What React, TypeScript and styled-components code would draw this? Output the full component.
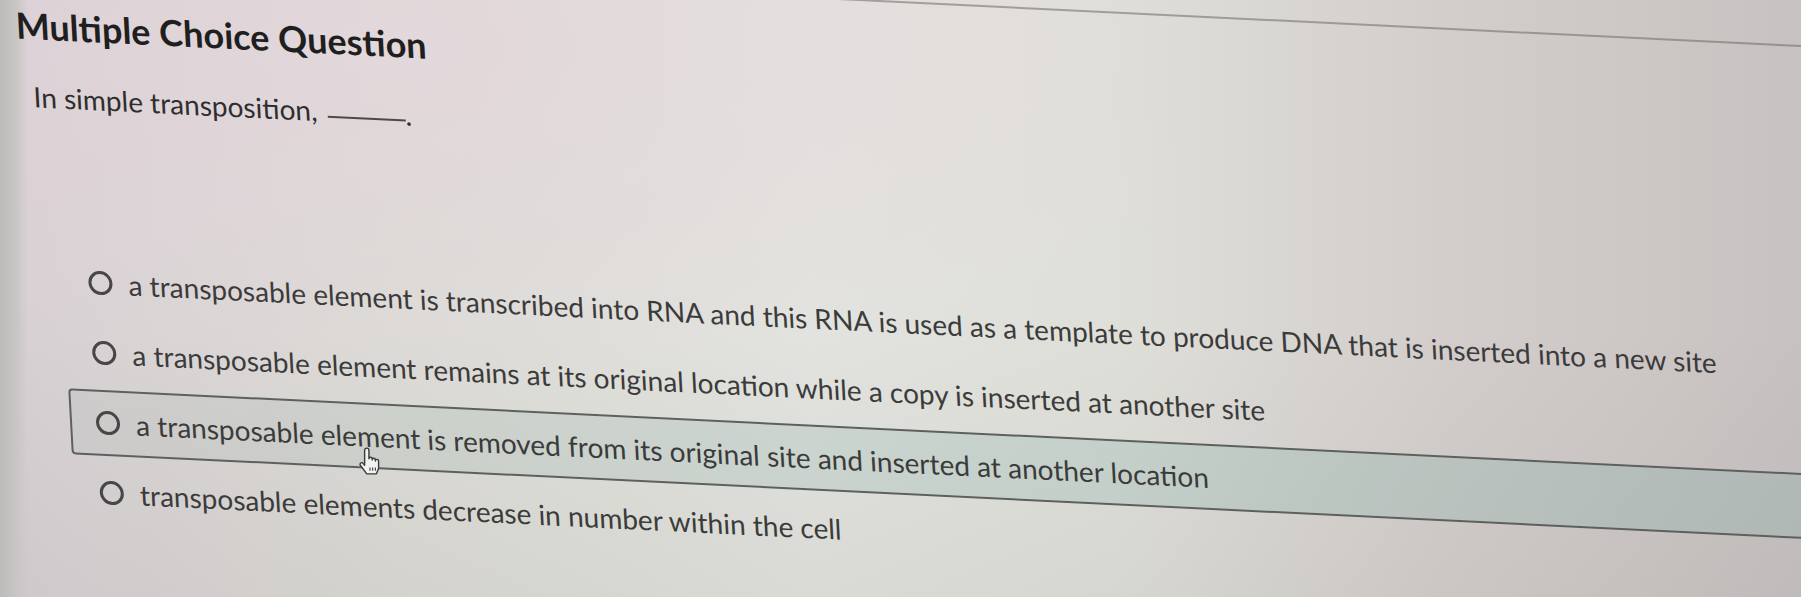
import styled, { createGlobalStyle } from "styled-components";

const GlobalStyle = createGlobalStyle`
  html, body {
    margin: 0;
    padding: 0;
    overflow: hidden;
    background: #d9d8d4;
  }
`;

const Screen = styled.div`
  position: relative;
  width: 1801px;
  height: 597px;
  overflow: hidden;
  font-family: "Lato", "Liberation Sans", sans-serif;
  background:
    linear-gradient(90deg, #bdbbb9 0, #c8c6c4 16px, rgba(0, 0, 0, 0) 28px),
    linear-gradient(180deg, rgba(0, 0, 0, 0) 55%, rgba(60, 60, 55, 0.05) 100%),
    radial-gradient(ellipse at 22% 8%, rgba(232, 212, 222, 0.55), rgba(0, 0, 0, 0) 45%),
    linear-gradient(
      90deg,
      #d7d0d3 0%,
      #dcdbd6 22%,
      #e2e3de 45%,
      #dfdfda 62%,
      #d3cecb 80%,
      #c8c1c1 100%
    );
`;

const Sheet = styled.div`
  width: 2100px;
  padding: 44px 0 0 12px;
  border-top: 2px solid rgba(110, 105, 100, 0.55);
  transform-origin: 0 0;
  transform: translateY(-43px) skew(3.1deg, 2.8deg);
`;

const Title = styled.h1`
  margin: 0;
  font-size: 36px;
  line-height: 42px;
  font-weight: 700;
  color: #1f1f1f;
`;

const Prompt = styled.p`
  margin: 33px 0 0 14px;
  font-size: 28px;
  line-height: 34px;
  color: #2e2e2e;
`;

const Blank = styled.span`
  display: inline-block;
  width: 78px;
  margin-left: 10px;
  border-bottom: 2px solid #4a4a4a;
  transform: translateY(-4px);
`;

const OptionList = styled.div`
  margin: 134px 0 0 33px;
  width: 1900px;
  display: flex;
  flex-direction: column;
  gap: 4px;
`;

const Option = styled.div<{ $selected?: boolean }>`
  height: 66px;
  box-sizing: border-box;
  display: flex;
  align-items: center;
  gap: 16px;
  padding-left: 24px;
  border: 2px solid ${(p) => (p.$selected ? "#5c605e" : "transparent")};
  border-radius: 4px;
  background: ${(p) =>
    p.$selected
      ? "linear-gradient(90deg, rgba(170, 178, 174, 0.18), rgba(140, 180, 172, 0.3) 60%, rgba(140, 175, 170, 0.35))"
      : "transparent"};
`;

const Radio = styled.span`
  flex: none;
  width: 24px;
  height: 24px;
  box-sizing: border-box;
  border: 3px solid #474747;
  border-radius: 50%;
`;

const OptionText = styled.span`
  font-size: 28px;
  color: #3b3b3b;
  white-space: nowrap;
`;

const Cursor = styled.svg`
  position: absolute;
  left: 358px;
  top: 447px;
  width: 24px;
  height: 29px;
`;

const options = [
  "a transposable element is transcribed into RNA and this RNA is used as a template to produce DNA that is inserted into a new site",
  "a transposable element remains at its original location while a copy is inserted at another site",
  "a transposable element is removed from its original site and inserted at another location",
  "transposable elements decrease in number within the cell",
];

const App = () => {
  return (
    <Screen>
      <GlobalStyle />
      <Sheet>
        <Title>Multiple Choice Question</Title>
        <Prompt>
          In simple transposition,
          <Blank />.
        </Prompt>
        <OptionList>
          {options.map((text, i) => (
            <Option key={i} $selected={i === 2}>
              <Radio />
              <OptionText>{text}</OptionText>
            </Option>
          ))}
        </OptionList>
      </Sheet>
      <Cursor viewBox="0 0 22 27">
        <path
          d="M6 14V3a2 2 0 0 1 4 0v8a1.5 1.5 0 0 1 3 0v1a1.5 1.5 0 0 1 3 0v1a1.5 1.5 0 0 1 3 0v7l-2 5H8l-6-8a1.5 1.5 0 0 1 2.5-1.8L6 17z"
          fill="#f2f2f0"
          stroke="#3a3a3a"
          strokeWidth="1.3"
          strokeLinejoin="round"
        />
        <path d="M11 19v3M13.5 19v3M16 19v3" stroke="#3a3a3a" strokeWidth="1" />
      </Cursor>
    </Screen>
  );
};

export default App;
